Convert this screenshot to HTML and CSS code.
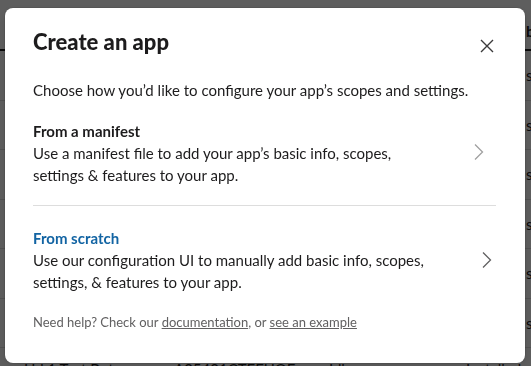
FILE: index.html
```html
<!DOCTYPE html>
<html lang="en">
<head>
    <meta charset="UTF-8">
    <meta name="viewport" content="width=device-width, initial-scale=1.0">
    <title>Create an app</title>
    <link rel="stylesheet" href="styles.css">
</head>
<body>
    <div class="page">
        <div class="table-head">
            <span class="cell cell-name">App Name</span>
            <span class="cell cell-id">App ID</span>
            <span class="cell cell-dist">Distribution</span>
            <span class="cell cell-bot">bot</span>
        </div>
        <div class="table-row"><span class="cell cell-name">Deploy Bot</span><span class="cell cell-id">A0541CTEFUA</span><span class="cell cell-dist">Active</span><span class="cell cell-bot">scopes</span></div>
        <div class="table-row"><span class="cell cell-name">Standup</span><span class="cell cell-id">A0541CTEFUB</span><span class="cell cell-dist">Active</span><span class="cell cell-bot">scopes</span></div>
        <div class="table-row"><span class="cell cell-name">Reminders</span><span class="cell cell-id">A0541CTEFUC</span><span class="cell cell-dist">Active</span><span class="cell cell-bot">scopes</span></div>
        <div class="table-row"><span class="cell cell-name">Polls</span><span class="cell cell-id">A0541CTEFUD</span><span class="cell cell-dist">Active</span><span class="cell cell-bot">scopes</span></div>
        <div class="table-row"><span class="cell cell-name">Alerts</span><span class="cell cell-id">A0541CTEFUE</span><span class="cell cell-dist">Active</span><span class="cell cell-bot">scopes</span></div>
        <div class="table-row"><span class="cell cell-name">Notes</span><span class="cell cell-id">A0541CTEFUF</span><span class="cell cell-dist">Active</span><span class="cell cell-bot">scopes</span></div>
        <div class="table-row table-row-last"><span class="cell cell-name">Hd 1 Test Bot</span><span class="cell cell-id">A05401CTEFUOE</span><span class="cell cell-dist">Idle</span><span class="cell cell-state">Installed</span></div>
    </div>

    <div class="overlay">
        <div class="modal">
            <div class="modal-header">
                <h1 class="modal-title">Create an app</h1>
                <button class="close-button" aria-label="Close">
                    <svg width="14" height="14" viewBox="0 0 14 14">
                        <path d="M1 1 L13 13 M13 1 L1 13" stroke="#3b3a3b" stroke-width="1.4" fill="none"/>
                    </svg>
                </button>
            </div>
            <p class="modal-intro">Choose how you’d like to configure your app’s scopes and settings.</p>

            <div class="option">
                <div class="option-text">
                    <div class="option-title">From a manifest</div>
                    <div class="option-desc">Use a manifest file to add your app’s basic info, scopes, settings &amp; features to your app.</div>
                </div>
                <span class="chevron">
                    <svg width="10" height="16" viewBox="0 0 10 16">
                        <path d="M1 0.5 L8.5 8 L1 15.5" stroke="currentColor" stroke-width="1.3" fill="none"/>
                    </svg>
                </span>
            </div>

            <div class="option option-hover">
                <div class="option-text">
                    <div class="option-title">From scratch</div>
                    <div class="option-desc">Use our configuration UI to manually add basic info, scopes, settings, &amp; features to your app.</div>
                </div>
                <span class="chevron">
                    <svg width="10" height="16" viewBox="0 0 10 16">
                        <path d="M1 0.5 L8.5 8 L1 15.5" stroke="currentColor" stroke-width="1.3" fill="none"/>
                    </svg>
                </span>
            </div>

            <p class="modal-footer">Need help? Check our <a href="#">documentation</a>, or <a href="#">see an example</a></p>
        </div>
    </div>
</body>
</html>
```

FILE: styles.css
```css
body {
    margin: 0;
    padding: 0;
    font-family: 'Lato', 'Noto Sans', sans-serif;
    background: #ffffff;
    color: #1d1c1d;
    height: 100vh;
    overflow: hidden;
}

/* Page under the modal */
.page {
    width: 100%;
    height: 100vh;
    overflow: hidden;
}

.table-head,
.table-row {
    display: flex;
    align-items: center;
    box-sizing: border-box;
    font-size: 15px;
    white-space: nowrap;
    overflow: hidden;
}

.table-head {
    height: 51px;
    padding-top: 12px;
    border-bottom: 2px solid #1d1c1d;
    font-weight: 700;
}

.table-row {
    height: 49.5px;
    border-bottom: 1px solid #dddddd;
}

.table-row-last {
    align-items: flex-start;
    height: 30px;
    padding-top: 12px;
    border-bottom: none;
}

.cell {
    display: block;
    flex-shrink: 0;
}

.cell-name {
    width: 150px;
    padding-left: 24px;
}

.cell-id {
    width: 155px;
}

.cell-dist {
    width: 197px;
}

.cell-bot {
    width: 60px;
}

.cell-state {
    margin-left: -60px;
}

/* Modal */
.overlay {
    position: fixed;
    top: 0;
    left: 0;
    right: 0;
    bottom: 0;
    background: rgba(0, 0, 0, 0.63);
    padding: 8px 0 0 5px;
}

.modal {
    width: 520px;
    box-sizing: border-box;
    background: #ffffff;
    border-radius: 8px;
    padding: 19px 29px 32px 28px;
    box-shadow: 0 0 0 1px rgba(0, 0, 0, 0.08), 0 4px 12px rgba(0, 0, 0, 0.12);
}

.modal-header {
    display: flex;
    justify-content: space-between;
    align-items: flex-start;
}

.modal-title {
    margin: 0;
    font-size: 22px;
    line-height: 30px;
    font-weight: 900;
    color: #1d1c1d;
}

.close-button {
    width: 24px;
    height: 24px;
    margin: 7px -3px 0 0;
    padding: 0;
    border: none;
    background: none;
    display: flex;
    align-items: center;
    justify-content: center;
    cursor: pointer;
}

.modal-intro {
    margin: 21px 0 0;
    font-size: 15px;
    line-height: 22px;
}

.option {
    display: flex;
    align-items: center;
    padding: 19px 0 19px;
    border-bottom: 1px solid #dddddd;
    cursor: pointer;
}

.option + .option {
    padding: 21px 0 20px;
    border-bottom: none;
}

.option-text {
    width: 398px;
    font-size: 15px;
    line-height: 22px;
}

.option-title {
    font-weight: 700;
}

.option-hover .option-title {
    color: #1264a3;
}

.chevron {
    display: flex;
    margin: -2px 12px 0 auto;
    color: #a0a0a0;
}

.option-hover .chevron {
    margin-top: 0;
    color: #616061;
    transform: translateX(8px);
}

.modal-footer {
    margin: 0;
    font-size: 13px;
    line-height: 18px;
    color: #616061;
}

.modal-footer a {
    color: #616061;
    text-decoration: underline;
}
```
